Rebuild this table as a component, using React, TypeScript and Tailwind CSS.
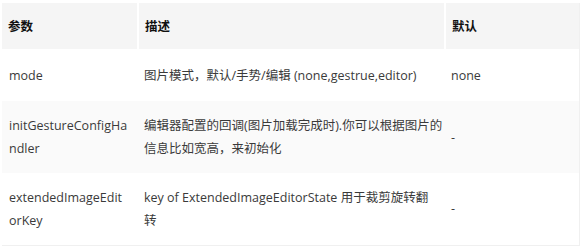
const rows = [
  {
    name: ["mode"],
    desc: ["图片模式，默认/手势/编辑 (none,gestrue,editor)"],
    def: "none",
    h: "h-[52px]",
    bg: "bg-white",
  },
  {
    name: ["initGestureConfigHa", "ndler"],
    desc: ["编辑器配置的回调(图片加载完成时).你可以根据图片的", "信息比如宽高，来初始化"],
    def: "-",
    h: "h-[72px]",
    bg: "bg-[#fafafa]",
  },
  {
    name: ["extendedImageEdit", "orKey"],
    desc: ["key of ExtendedImageEditorState 用于裁剪旋转翻", "转"],
    def: "-",
    h: "h-[72px]",
    bg: "bg-white",
  },
];

export default function App() {
  return (
    <div className="w-[582px] h-[247px] bg-white pt-[3px] pl-[2px] font-['Open_Sans','Noto_Sans_CJK_SC',sans-serif] text-[12.5px] leading-[23px] text-[#3a3a3a]">
      <table className="w-[578px] table-fixed border-collapse border-r border-b border-[#f0f0f0]">
        <colgroup>
          <col className="w-[136px]" />
          <col className="w-[307px]" />
          <col />
        </colgroup>
        <thead>
          <tr className="h-[46px] bg-[#f5f5f5]">
            <th className="border-r-2 border-white px-[6px] text-left font-bold text-[#111]">参数</th>
            <th className="border-r-2 border-white px-[6px] text-left font-bold text-[#111]">描述</th>
            <th className="px-[6px] text-left font-bold text-[#111]">默认</th>
          </tr>
        </thead>
        <tbody>
          {rows.map((r) => (
            <tr key={r.def + r.name[0]} className={`${r.h} ${r.bg} align-middle`}>
              <td className="px-[7px]">
                {r.name.map((l) => (
                  <div key={l}>{l}</div>
                ))}
              </td>
              <td className="px-[6px]">
                {r.desc.map((l) => (
                  <div key={l} className="whitespace-nowrap">{l}</div>
                ))}
              </td>
              <td className="px-[6px]">{r.def}</td>
            </tr>
          ))}
        </tbody>
      </table>
    </div>
  );
}
